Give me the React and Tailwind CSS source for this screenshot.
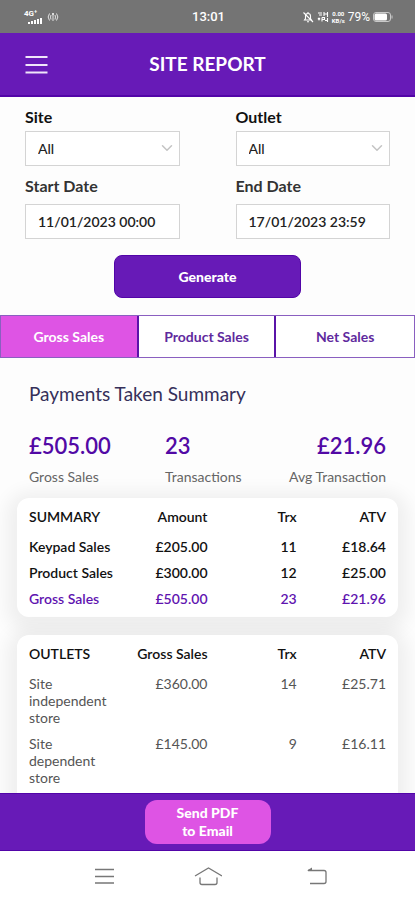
import React, { useState } from 'react';
import { ChevronDown } from 'lucide-react';

const stats = [
  { value: '£505.00', label: 'Gross Sales' },
  { value: '23', label: 'Transactions' },
  { value: '£21.96', label: 'Avg Transaction', right: true },
];

const summaryRows = [
  { name: 'Keypad Sales', amount: '£205.00', trx: '11', atv: '£18.64' },
  { name: 'Product Sales', amount: '£300.00', trx: '12', atv: '£25.00' },
  { name: 'Gross Sales', amount: '£505.00', trx: '23', atv: '£21.96', total: true },
];

const outletRows = [
  { name: 'Site independent store', amount: '£360.00', trx: '14', atv: '£25.71' },
  { name: 'Site dependent store', amount: '£145.00', trx: '9', atv: '£16.11' },
];

const tabs = ['Gross Sales', 'Product Sales', 'Net Sales'];

function StatusBar() {
  return (
    <div className="grid h-[33px] shrink-0 grid-cols-[1fr_auto_1fr] items-center bg-[#747474] pl-6 pr-[22px] font-[Roboto,sans-serif] text-white">
      <div className="flex items-center gap-1">
        <div className="flex h-4 items-end">
          <span className="self-start text-[8px] leading-[10px] font-bold">4G⁺</span>
          <svg className="-ml-[10px] h-[14px] w-4" viewBox="0 0 16 14" fill="currentColor" aria-hidden="true">
            <rect x="1" y="11" width="2" height="2" />
            <rect x="4" y="10" width="2" height="3" />
            <rect x="7" y="9" width="2" height="4" />
            <rect x="10" y="8" width="2" height="5" />
            <rect x="13" y="7" width="2" height="6" />
          </svg>
        </div>
        <svg className="h-3 w-3" viewBox="0 0 12 12" fill="none" stroke="currentColor" aria-hidden="true">
          <path d="M2.500 2.500Q-.2 6 2.500 9.500M9.500 2.500Q12.200 6 9.500 9.500M4 4Q3 6 4 8.500M8 4Q9 6 8 8.500M6 4v6" opacity=".8" />
          <circle cx="6" cy="3" r="1" fill="currentColor" stroke="none" />
        </svg>
      </div>
      <span className="text-[13px] leading-4 font-medium">13:01</span>
      <div className="flex items-center justify-end gap-[3px]">
        <svg className="h-3 w-3" viewBox="0 0 12 12" fill="none" stroke="currentColor" strokeWidth="1.1" aria-hidden="true">
          <path d="M2.500 9h7L8.500 7.500V5a2.500 2.500 0 0 0-5 0v2.500zM6 1v1.500M5 10.800h2M1.500 1.500l9.500 9.500" />
        </svg>
        <svg className="h-3 w-3" viewBox="0 0 12 12" fill="none" stroke="currentColor" strokeWidth="1.1" aria-hidden="true">
          <path d="M1 2h4M2 4h3M7 1v4M10.500 1v5M7 3h3M1 7l2 2M3 7l-2 2M5 6.500v4M5 6.500h2.500v2H5M10.500 7v4M8 9.500h2.500" />
        </svg>
        <div className="flex flex-col text-center text-[6px] leading-[7px] font-bold">
          <span>0.00</span>
          <span>KB/s</span>
        </div>
        <span className="text-xs leading-4">79%</span>
        <svg className="h-3 w-5" viewBox="0 0 20 12" aria-hidden="true">
          <rect x=".5" y="1.500" width="17" height="9" rx="2.500" fill="none" stroke="#c9c9c9" />
          <rect x="1.500" y="2.500" width="12.500" height="7" rx="1.500" fill="#fff" />
          <path d="M19 4.500v3" stroke="#c9c9c9" />
        </svg>
      </div>
    </div>
  );
}

function SelectField({ id, label }) {
  return (
    <div>
      <label htmlFor={id} className="mb-1 block text-base leading-5 font-bold">{label}</label>
      <div className="relative">
        <select id={id} className="h-[35px] w-full appearance-none border border-[#d4d4d4] bg-white px-3 text-sm font-medium text-[#222]">
          <option>All</option>
        </select>
        <ChevronDown className="pointer-events-none absolute top-2 right-1 h-[18px] w-[18px] text-[#c4c4c4]" strokeWidth={2} />
      </div>
    </div>
  );
}

function DateField({ id, label, value }) {
  return (
    <div>
      <label htmlFor={id} className="mb-2 block text-base leading-5 font-bold text-[#333]">{label}</label>
      <input
        id={id}
        type="text"
        defaultValue={value}
        className="h-[35px] w-full border border-[#d4d4d4] bg-white px-3 text-sm font-semibold text-[#222]"
      />
    </div>
  );
}

function ReportTable({ title, amountLabel, rows, light }) {
  return (
    <div className={`rounded-xl bg-white px-3 pt-[7px] shadow-[0_4px_18px_10px_rgba(0,0,0,0.06)] ${light ? 'pb-6' : 'pb-[6px]'}`}>
      <table className="w-full table-fixed text-right text-sm leading-[17px]">
        <thead>
          <tr>
            <th className="pt-[3px] pb-2 text-left font-semibold">{title}</th>
            <th className="pt-[3px] pb-2 font-semibold">{amountLabel}</th>
            <th className="pt-[3px] pb-2 font-semibold">Trx</th>
            <th className="pt-[3px] pb-2 font-semibold">ATV</th>
          </tr>
        </thead>
        <tbody className={light ? 'text-[#555]' : 'font-semibold'}>
          {rows.map((row) => (
            <tr key={row.name} className={row.total ? 'align-top text-[#5f14b0]' : 'align-top'}>
              <td className={light ? 'pt-[5px] pr-3 pb-1 text-left' : 'pt-[5px] pb-1 text-left whitespace-nowrap'}>{row.name}</td>
              <td className="pt-[5px] pb-1">{row.amount}</td>
              <td className="pt-[5px] pb-1">{row.trx}</td>
              <td className="pt-[5px] pb-1">{row.atv}</td>
            </tr>
          ))}
        </tbody>
      </table>
    </div>
  );
}

export default function App() {
  const [activeTab, setActiveTab] = useState('Gross Sales');

  return (
    <div className="flex h-screen flex-col overflow-hidden bg-[#fdfdfd] font-[Lato,sans-serif] text-[#111]">
      <StatusBar />

      <header className="grid h-16 shrink-0 grid-cols-[1fr_auto_1fr] items-center border-b-2 border-[#5205a8] bg-[#671ab7] px-6 text-white">
        <button type="button" aria-label="Menu" className="w-6">
          <svg className="h-6 w-6" viewBox="0 0 24 24" stroke="#f0e6fa" strokeWidth="2" aria-hidden="true">
            <path d="M1.500 5h22M1.500 13h22M1.500 20.500h22" />
          </svg>
        </button>
        <h1 className="text-[19px] leading-6 font-bold">SITE REPORT</h1>
      </header>

      <main className="min-h-0 flex-1 overflow-hidden">
        <form className="px-[25px] pt-[10px]" onSubmit={(e) => e.preventDefault()}>
          <div className="grid grid-cols-2 gap-x-14 gap-y-[10px]">
            <SelectField id="site" label="Site" />
            <SelectField id="outlet" label="Outlet" />
            <DateField id="start" label="Start Date" value="11/01/2023 00:00" />
            <DateField id="end" label="End Date" value="17/01/2023 23:59" />
          </div>
          <button type="submit" className="mx-auto mt-4 block h-[43px] w-[187px] rounded-lg border border-[#5205a8] bg-[#671ab7] text-sm font-black text-white">
            Generate
          </button>
        </form>

        <div role="tablist" className="mt-[17px] grid grid-cols-3 divide-x-2 divide-[#5a14a8] border border-[#8a5fc0] bg-white">
          {tabs.map((tab) => (
            <button
              key={tab}
              type="button"
              role="tab"
              aria-selected={tab === activeTab}
              onClick={() => setActiveTab(tab)}
              className={tab === activeTab
                ? 'h-[41px] bg-[#de54e4] text-sm font-bold text-white'
                : 'h-[41px] text-sm font-bold text-[#5f2a9e]'}
            >
              {tab}
            </button>
          ))}
        </div>

        <section className="px-[29px] pt-[22px]">
          <h2 className="text-[19px] leading-7 text-[#35305a]">Payments Taken Summary</h2>
          <div className="mt-6 grid grid-cols-[8fr_7fr_6fr]">
            {stats.map((stat) => (
              <div key={stat.label} className={stat.right ? 'text-right whitespace-nowrap' : ''}>
                <p className="text-[22px] leading-7 font-semibold text-[#5209a5]">{stat.value}</p>
                <p className="mt-[7px] text-sm leading-5 text-[#666]">{stat.label}</p>
              </div>
            ))}
          </div>
        </section>

        <div className="flex flex-col gap-[18px] px-[17px] pt-[11px]">
          <ReportTable title="SUMMARY" amountLabel="Amount" rows={summaryRows} />
          <ReportTable title="OUTLETS" amountLabel="Gross Sales" rows={outletRows} light />
        </div>
      </main>

      <footer className="flex h-[58px] shrink-0 items-center justify-center border-y border-[#5205a8] bg-[#671ab7]">
        <button type="button" className="h-11 w-[126px] rounded-xl bg-[#de54e4] text-sm leading-[18px] font-black text-white">
          Send PDF<br />to Email
        </button>
      </footer>

      <nav className="flex h-[49px] shrink-0 items-center justify-between bg-white px-[90px] text-[#777]">
        <button type="button" aria-label="Recent apps">
          <svg className="h-7 w-7" viewBox="0 0 28 28" fill="none" stroke="currentColor" strokeWidth="1.300" aria-hidden="true">
            <path d="M5 7.500h19M5 14.500h19M5 21h19" />
          </svg>
        </button>
        <button type="button" aria-label="Home">
          <svg className="h-7 w-7" viewBox="0 0 28 28" fill="none" stroke="currentColor" strokeWidth="1.300" aria-hidden="true">
            <path d="M1 14L14.500 6L28 14M6 15.500v5q0 2 2 2h13q2 0 2-2v-5" />
          </svg>
        </button>
        <button type="button" aria-label="Back">
          <svg className="h-7 w-7 overflow-visible" viewBox="0 0 28 28" fill="none" stroke="currentColor" strokeWidth="1.300" aria-hidden="true">
            <path d="M13 21.500h14q2 0 2-2v-9q0-2-2-2H11" />
            <path d="M10 8.500l5-3v3z" fill="currentColor" stroke="none" />
          </svg>
        </button>
      </nav>
    </div>
  );
}
